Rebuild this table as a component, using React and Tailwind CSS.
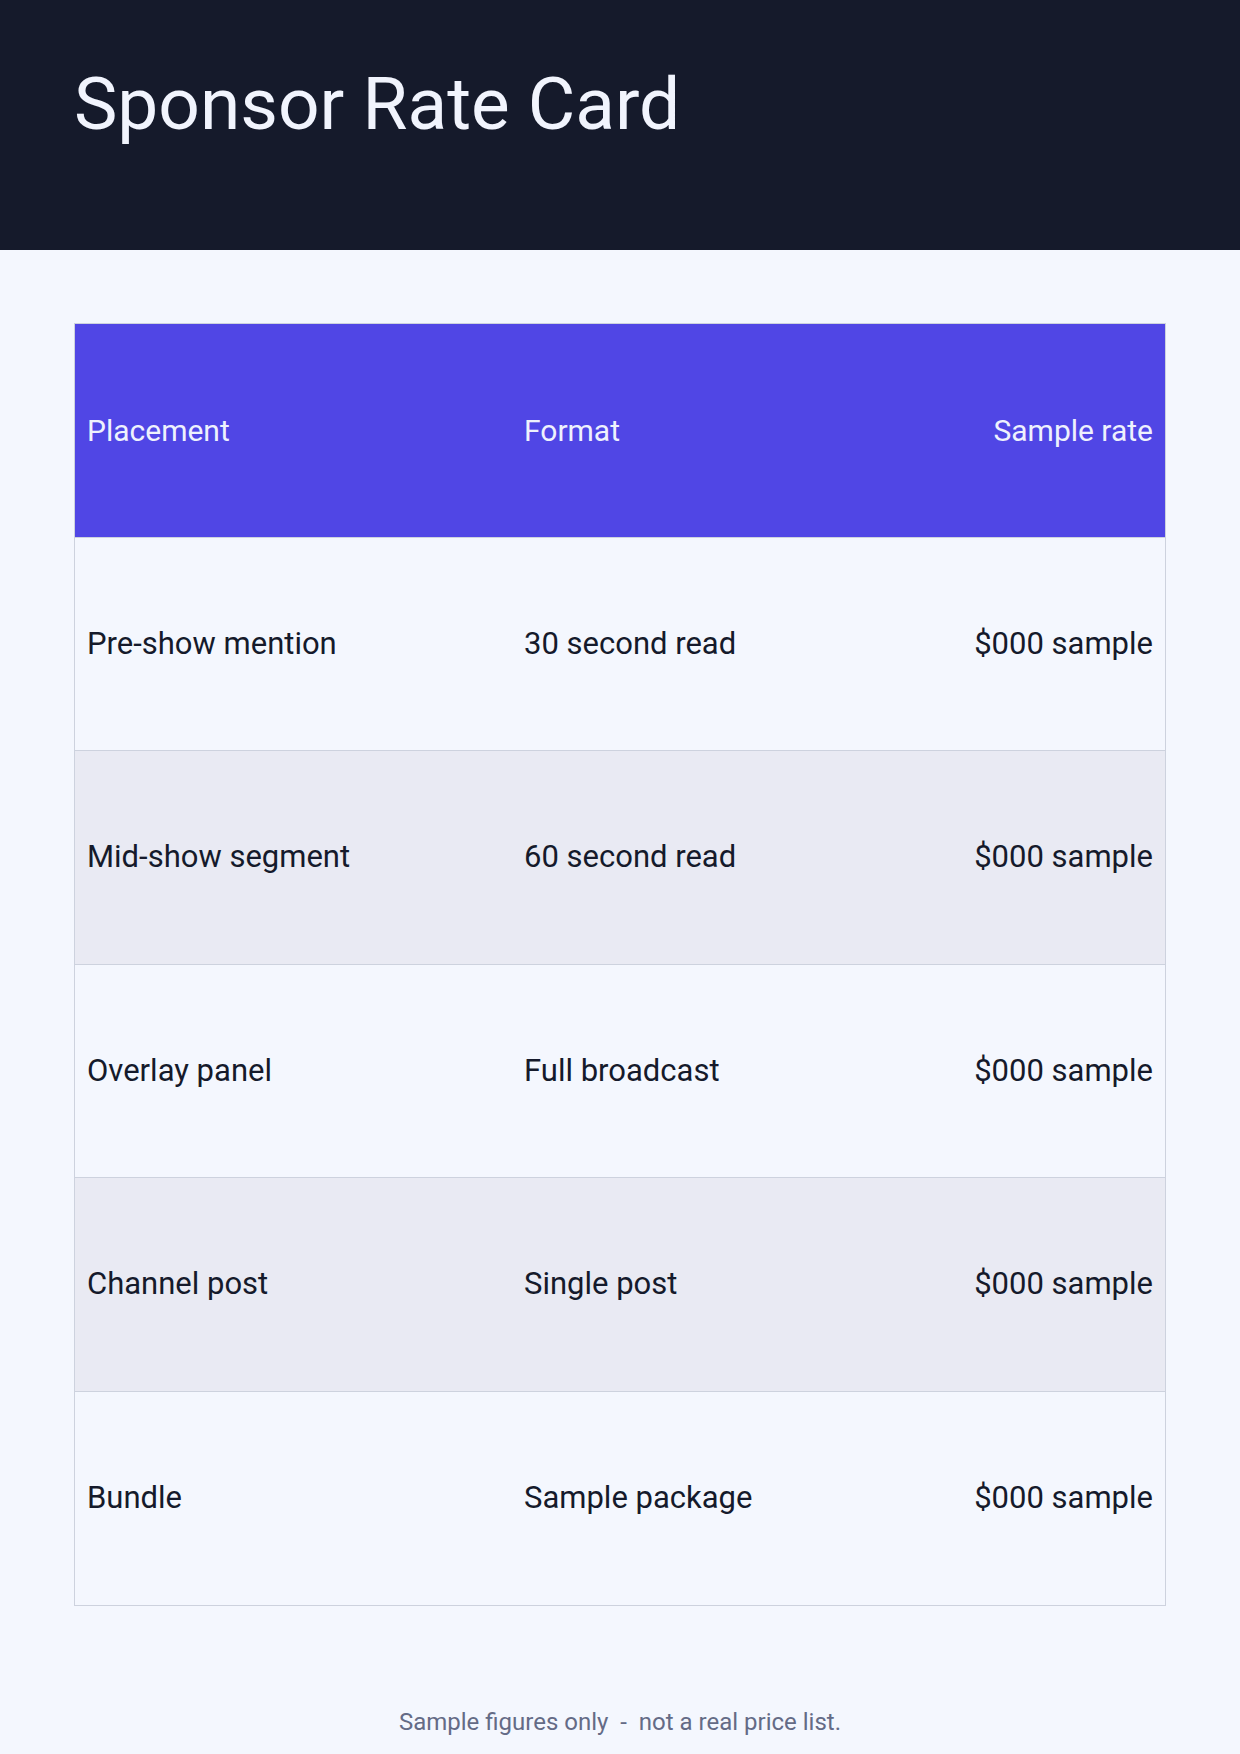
import React from "react";

const ROWS = [
  { placement: "Pre-show mention", format: "30 second read", rate: "$000 sample" },
  { placement: "Mid-show segment", format: "60 second read", rate: "$000 sample" },
  { placement: "Overlay panel", format: "Full broadcast", rate: "$000 sample" },
  { placement: "Channel post", format: "Single post", rate: "$000 sample" },
  { placement: "Bundle", format: "Sample package", rate: "$000 sample" },
];

export default function App() {
  return (
    <div
      className="flex min-h-[1754px] w-[1240px] flex-col bg-[#f4f7fe]"
      style={{ fontFamily: "Roboto, 'Liberation Sans', sans-serif" }}
    >
      <header className="h-[250px] bg-[#151a2b] px-[74px] pt-[64px]">
        <h1 className="text-[73px] leading-[80px] font-normal text-[#f1f4fd]">
          Sponsor Rate Card
        </h1>
      </header>

      <main className="px-[74px] pt-[73px]">
        <div className="border border-[#cdd2de]">
          <div className="grid h-[213.5px] grid-cols-[437px_1fr_300px] items-center border-b border-[#cdd2de] bg-[#5046e5] px-[12px] text-[30px] text-[#eef1fd]">
            <span>Placement</span>
            <span>Format</span>
            <span className="text-right">Sample rate</span>
          </div>
          {ROWS.map((row, index) => (
            <div
              key={row.placement}
              className={
                "grid h-[213.5px] grid-cols-[437px_1fr_300px] items-center px-[12px] text-[31px] text-[#151a2b] " +
                (index % 2 === 1 ? "bg-[#e9eaf3] " : "bg-[#f4f7fe] ") +
                (index < ROWS.length - 1 ? "border-b border-[#cdd2de]" : "")
              }
            >
              <span>{row.placement}</span>
              <span>{row.format}</span>
              <span className="text-right">{row.rate}</span>
            </div>
          ))}
        </div>
      </main>

      <footer className="mt-auto pb-[14px] text-center">
        <p className="whitespace-pre text-[24px] text-[#646b86]">
          Sample figures only  -  not a real price list.
        </p>
      </footer>
    </div>
  );
}
